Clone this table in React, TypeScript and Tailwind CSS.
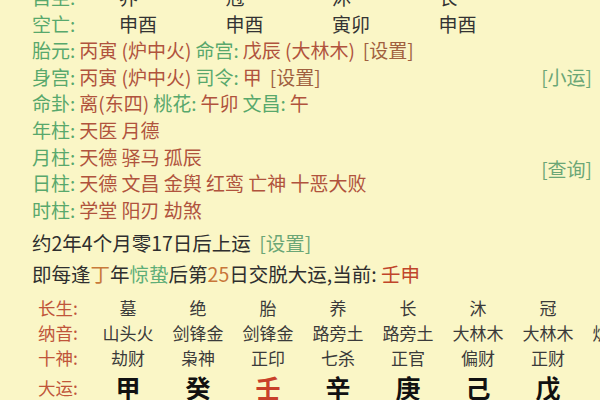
import React from 'react';

const G = 'text-[#58a86c]';
const R = 'text-[#b0533d]';

const kongwang = ['申酉', '申酉', '寅卯', '申酉'];
const topRow = ['养', '冠', '沐', '长'];

const table = [
  { label: '长生:', cells: ['墓', '绝', '胎', '养', '长', '沐', '冠', '临'] },
  { label: '纳音:', cells: ['山头火', '剑锋金', '剑锋金', '路旁土', '路旁土', '大林木', '大林木', '炉中火'] },
  { label: '十神:', cells: ['劫财', '枭神', '正印', '七杀', '正官', '偏财', '正财', '伤官'] },
];
const dayun = ['甲', '癸', '壬', '辛', '庚', '己', '戊', '丁'];

const App: React.FC = () => {
  return (
    <div className="w-[600px] h-[400px] overflow-hidden bg-[#faf6c6] text-[#333] font-['Noto_Sans_CJK_SC',sans-serif]">
      <div className="-mt-[16px] pl-[32px] pr-[8px] text-[19px] leading-[26.6px]">
        {/* pillar rows */}
        <div className="flex">
          <span className={`w-[87px] ${G}`}>自坐:</span>
          {topRow.map((v, i) => (
            <span key={i} className="w-[106.5px]">{v}</span>
          ))}
        </div>
        <div className="flex">
          <span className={`w-[87px] ${G}`}>空亡:</span>
          {kongwang.map((v, i) => (
            <span key={i} className="w-[106.5px]">{v}</span>
          ))}
        </div>

        <div className="flex gap-[4px] whitespace-nowrap">
          <span className={G}>胎元:</span>
          <span className={R}>丙寅 (炉中火)</span>
          <span className={G}>命宫:</span>
          <span className={R}>戊辰 (大林木)</span>
          <span className="ml-[4px] text-[#a0603f]">[设置]</span>
        </div>
        <div className="flex gap-[4px] whitespace-nowrap">
          <span className={G}>身宫:</span>
          <span className={R}>丙寅 (炉中火)</span>
          <span className={G}>司令:</span>
          <span className={R}>甲</span>
          <span className="ml-[4px] text-[#a0603f]">[设置]</span>
          <span className="ml-auto text-[#6ba676]">[小运]</span>
        </div>
        <div className="flex gap-[4px] whitespace-nowrap">
          <span className={G}>命卦:</span>
          <span className={R}>离(东四)</span>
          <span className={G}>桃花:</span>
          <span className={R}>午卯</span>
          <span className={G}>文昌:</span>
          <span className={R}>午</span>
        </div>
        <div className="flex gap-[4px]">
          <span className={G}>年柱:</span>
          <span className={R}>天医 月德</span>
        </div>
        <div className="flex items-center">
          <div className="flex flex-col">
            <div className="flex gap-[4px]">
              <span className={G}>月柱:</span>
              <span className={R}>天德 驿马 孤辰</span>
            </div>
            <div className="flex gap-[4px] whitespace-nowrap">
              <span className={G}>日柱:</span>
              <span className={R}>天德 文昌 金舆 红鸾 亡神 十恶大败</span>
            </div>
          </div>
          <span className="ml-auto -mt-[2px] text-[#6ba676]">[查询]</span>
        </div>
        <div className="flex gap-[4px]">
          <span className={G}>时柱:</span>
          <span className={R}>学堂 阳刃 劫煞</span>
        </div>

        {/* luck start */}
        <div className="mt-[4px] h-[31px] leading-[31px] text-[19.5px] whitespace-nowrap text-[#2e2e2e]">
          约2年4个月零17日后上运 <span className="ml-[4px] text-[#6ba676]">[设置]</span>
        </div>
        <div className="h-[31px] leading-[31px] text-[19.5px] whitespace-nowrap text-[#2e2e2e]">
          即每逢<span className="text-[#c87a3a]">丁</span>年<span className="text-[#5fae78]">惊蛰</span>后第<span className="text-[#c8763a]">25</span>日交脱大运,当前: <span className="text-[#c0452a]">壬申</span>
        </div>
      </div>

      {/* da yun table */}
      <div className="mt-[6px] pl-[38px] grid grid-cols-[55px_repeat(8,70px)] whitespace-nowrap">
        {table.map((row) => (
          <React.Fragment key={row.label}>
            <div className="h-[25px] leading-[25px] text-[17.5px] text-[#c0553a]">{row.label}</div>
            {row.cells.map((c, i) => (
              <div key={i} className="h-[25px] leading-[25px] text-[17px] text-center text-[#3a3a3a]">{c}</div>
            ))}
          </React.Fragment>
        ))}
        <div className="h-[35px] leading-[35px] text-[17.5px] text-[#c0553a]">大运:</div>
        {dayun.map((c, i) => (
          <div
            key={i}
            className={`h-[35px] leading-[35px] text-[25px] font-semibold text-center ${i === 2 ? 'text-[#c8402a]' : 'text-[#111]'}`}
          >
            {c}
          </div>
        ))}
      </div>
    </div>
  );
};

export default App;
